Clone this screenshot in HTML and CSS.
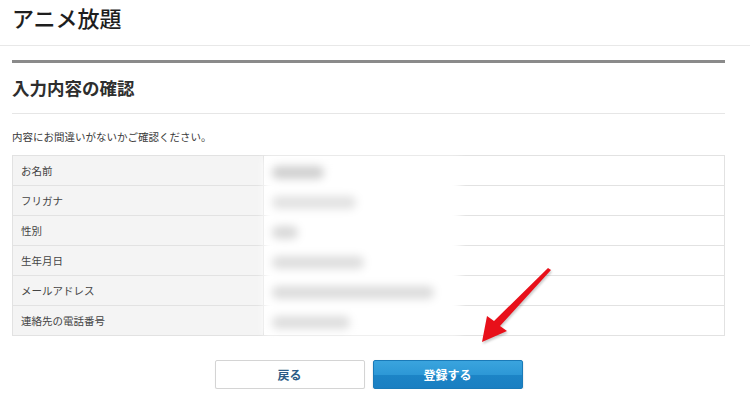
FILE: index.html
```html
<!DOCTYPE html>
<html lang="ja">
<head>
  <meta charset="UTF-8">
  <meta name="viewport" content="width=device-width, initial-scale=1.0">
  <title>アニメ放題 - 入力内容の確認</title>
  <link rel="stylesheet" href="styles.css">
</head>
<body>
  <header class="site-header">
    <h1>アニメ放題</h1>
  </header>

  <main class="content">
    <section class="confirm">
      <h2>入力内容の確認</h2>
      <p class="lead">内容にお間違いがないかご確認ください。</p>

      <div class="table-wrap">
        <table class="info">
          <tr><th>お名前</th><td></td></tr>
          <tr><th>フリガナ</th><td></td></tr>
          <tr><th>性別</th><td></td></tr>
          <tr><th>生年月日</th><td></td></tr>
          <tr><th>メールアドレス</th><td></td></tr>
          <tr><th>連絡先の電話番号</th><td></td></tr>
        </table>
        <!-- 個人情報はぼかし -->
        <div class="mask">
          <span class="blob b1"></span>
          <span class="blob b2"></span>
          <span class="blob b3"></span>
          <span class="blob b4"></span>
          <span class="blob b5"></span>
          <span class="blob b6"></span>
        </div>
      </div>

      <div class="actions">
        <button class="btn btn-back">戻る</button>
        <button class="btn btn-submit">登録する</button>
      </div>
    </section>
  </main>

  <svg class="arrow" width="750" height="420" viewBox="0 0 750 420">
    <polygon points="548,268 551,270 500,326 507,331 482,342 487,316 494,321" fill="#e8101a"/>
  </svg>
</body>
</html>
```

FILE: styles.css
```css
body {
  margin: 0;
  font-family: "Noto Sans CJK JP", "Noto Sans", sans-serif;
  color: #333;
  background: #fff;
}
.site-header {
  height: 46px;
  border-bottom: 1px solid #e8e8e8;
  padding: 0 12px;
  box-sizing: border-box;
}
.site-header h1 {
  margin: 0;
  font-size: 22px;
  font-weight: 500;
  line-height: 34px;
  color: #1e1e1e;
}
.content {
  padding: 0 25px 0 12px;
}
.confirm {
  margin-top: 14px;
  border-top: 3px solid #8a8a8a;
}
.confirm h2 {
  margin: 0;
  font-size: 17.5px;
  font-weight: 700;
  line-height: 50px;
  color: #2e2e2e;
  border-bottom: 1px solid #e6e6e6;
}
.lead {
  margin: 13px 0 8px;
  font-size: 10.5px;
  line-height: 20px;
  color: #3a3a3a;
}
.table-wrap {
  position: relative;
}
.info {
  width: 100%;
  border-collapse: collapse;
  border: 1px solid #e2e2e2;
  font-size: 10.5px;
}
.info th,
.info td {
  height: 29px;
  padding: 0;
  border-bottom: 1px solid #e2e2e2;
}
.info th {
  width: 242px;
  padding-left: 8px;
  text-align: left;
  font-weight: 400;
  color: #444;
  background: #f4f4f4;
  border-right: 1px solid #e0e0e0;
}
.info td {
  background: #fff;
}
.mask {
  position: absolute;
  left: 252px;
  top: 3px;
  width: 196px;
  bottom: 1px;
  background: #fff;
  filter: blur(4px);
}
.blob {
  position: absolute;
  left: 8px;
  height: 13px;
  border-radius: 6px;
  background: #d9d9d9;
}
.b1 { top: 8px; width: 52px; background: #d0d0d0; }
.b2 { top: 38px; width: 84px; background: #e2e2e2; }
.b3 { top: 68px; width: 26px; }
.b4 { top: 98px; width: 92px; background: #dedede; }
.b5 { top: 128px; width: 162px; background: #dcdcdc; }
.b6 { top: 158px; width: 78px; background: #dedede; }
.actions {
  display: flex;
  justify-content: center;
  gap: 8px;
  margin-top: 24px;
}
.btn {
  width: 150px;
  height: 29px;
  border-radius: 2px;
  font-family: inherit;
  font-size: 12px;
  font-weight: 700;
  cursor: pointer;
}
.btn-back {
  background: #fff;
  color: #2b5b86;
  border: 1px solid #d4d4d4;
  box-shadow: 0 1px 1px rgba(0, 0, 0, 0.08);
}
.btn-submit {
  color: #fff;
  border: 1px solid #1a7ab8;
  background: linear-gradient(#3aa4de 0%, #2d98d6 50%, #1c84c6 52%, #1a7fc2 100%);
  box-shadow: 0 1px 2px rgba(0, 0, 0, 0.2);
}
.arrow {
  position: absolute;
  left: 0;
  top: 0;
  pointer-events: none;
  filter: drop-shadow(1px 2px 1px rgba(0, 0, 0, 0.2));
}
```
